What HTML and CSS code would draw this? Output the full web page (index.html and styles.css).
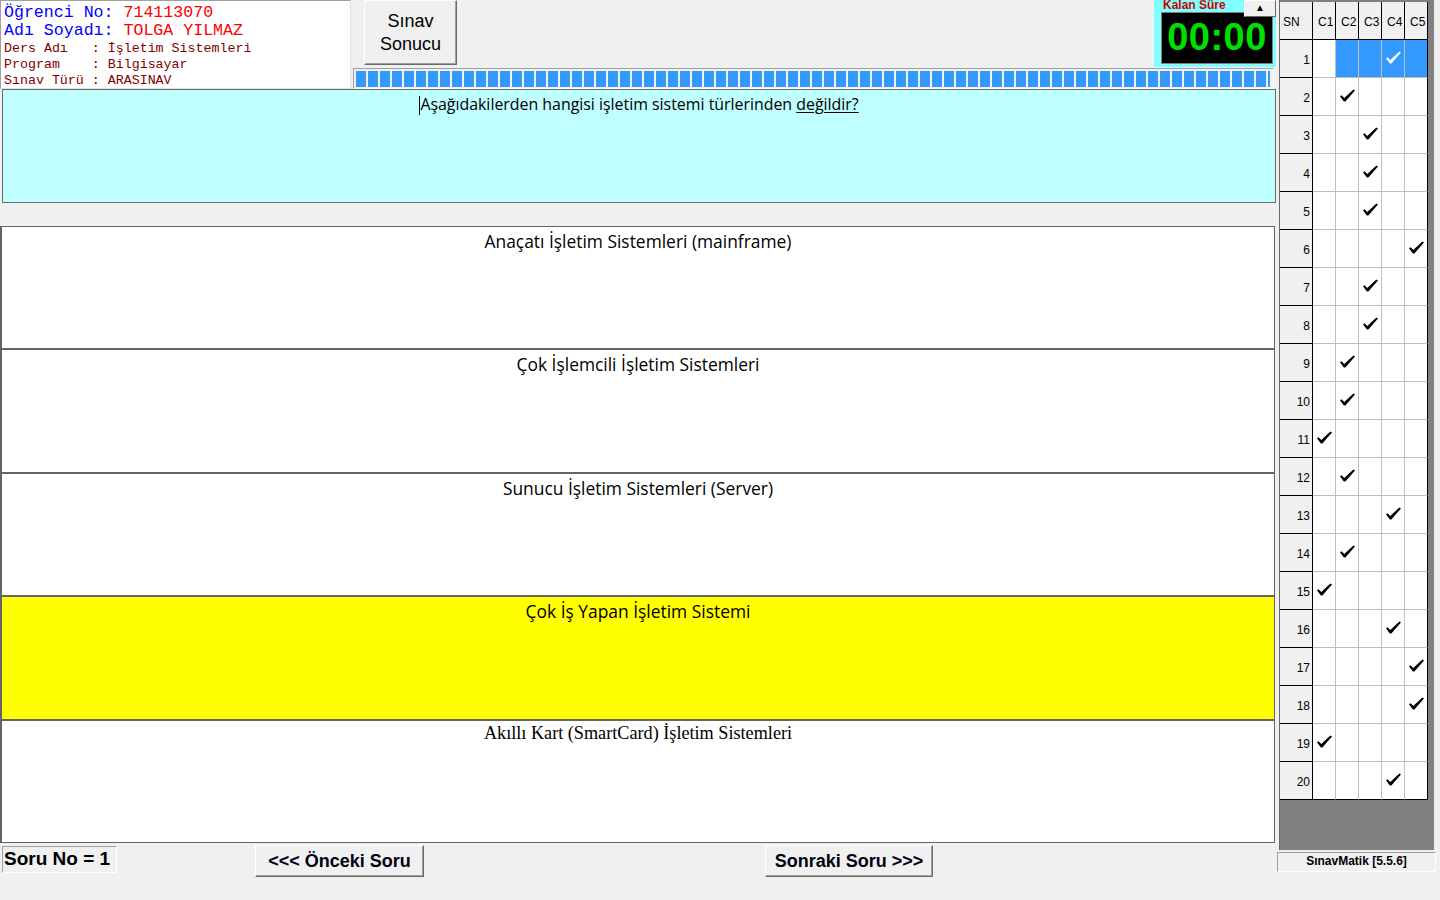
FILE: index.html
```html
<!DOCTYPE html>
<html lang="tr">
<head>
<meta charset="utf-8">
<title>SınavMatik</title>
<link rel="stylesheet" href="styles.css">
</head>
<body>
<svg class="defs" width="0" height="0" aria-hidden="true">
  <symbol id="tk" viewBox="0 0 16 13"><path d="M0 7.4 L1.7 6.1 L4.5 9.1 L14.3 0 L16 1.1 L5.7 13 L4.1 13 Z"/></symbol>
</svg>
<div class="main">
  <div class="top">
    <div class="info">
      <div class="big"><span class="lbl">Öğrenci No: </span><span class="val">714113070</span></div>
      <div class="big"><span class="lbl">Adı Soyadı: </span><span class="val">TOLGA YILMAZ</span></div>
      <div class="small first-small">Ders Adı   : İşletim Sistemleri</div>
      <div class="small">Program    : Bilgisayar</div>
      <div class="small">Sınav Türü : ARASINAV</div>
    </div>
    <div class="top-right">
      <div class="toolbar">
        <div class="btn-result">Sınav<br>Sonucu</div>
        <div class="timer">
          <div class="timer-label">Kalan Süre</div>
          <div class="timer-display">00:00</div>
          <div class="timer-up">▲</div>
        </div>
      </div>
      <div class="progress"><div class="progress-fill"></div></div>
    </div>
  </div>
  <div class="question"><span class="caret"></span>Aşağıdakilerden hangisi işletim sistemi türlerinden <u>değildir?</u></div>
  <div class="answers">
    <div class="answer">Anaçatı İşletim Sistemleri (mainframe)</div>
    <div class="answer">Çok İşlemcili İşletim Sistemleri</div>
    <div class="answer">Sunucu İşletim Sistemleri (Server)</div>
    <div class="answer chosen">Çok İş Yapan İşletim Sistemi</div>
    <div class="answer serif">Akıllı Kart (SmartCard) İşletim Sistemleri</div>
  </div>
  <div class="bottom">
    <div class="soru-no">Soru No = 1</div>
    <div class="nav prev">&lt;&lt;&lt; Önceki Soru</div>
    <div class="nav next">Sonraki Soru &gt;&gt;&gt;</div>
  </div>
</div>
<div class="side">
  <div class="panel">
    <div class="grid">
      <div class="gr head"><div class="sn">SN</div><div class="c">C1</div><div class="c">C2</div><div class="c">C3</div><div class="c">C4</div><div class="c">C5</div></div>
      <div class="gr"><div class="sn">1</div><div class="c"></div><div class="c s"></div><div class="c s"></div><div class="c s"><svg class="tk w"><use href="#tk"/></svg></div><div class="c s"></div></div>
      <div class="gr"><div class="sn">2</div><div class="c"></div><div class="c"><svg class="tk"><use href="#tk"/></svg></div><div class="c"></div><div class="c"></div><div class="c"></div></div>
      <div class="gr"><div class="sn">3</div><div class="c"></div><div class="c"></div><div class="c"><svg class="tk"><use href="#tk"/></svg></div><div class="c"></div><div class="c"></div></div>
      <div class="gr"><div class="sn">4</div><div class="c"></div><div class="c"></div><div class="c"><svg class="tk"><use href="#tk"/></svg></div><div class="c"></div><div class="c"></div></div>
      <div class="gr"><div class="sn">5</div><div class="c"></div><div class="c"></div><div class="c"><svg class="tk"><use href="#tk"/></svg></div><div class="c"></div><div class="c"></div></div>
      <div class="gr"><div class="sn">6</div><div class="c"></div><div class="c"></div><div class="c"></div><div class="c"></div><div class="c"><svg class="tk"><use href="#tk"/></svg></div></div>
      <div class="gr"><div class="sn">7</div><div class="c"></div><div class="c"></div><div class="c"><svg class="tk"><use href="#tk"/></svg></div><div class="c"></div><div class="c"></div></div>
      <div class="gr"><div class="sn">8</div><div class="c"></div><div class="c"></div><div class="c"><svg class="tk"><use href="#tk"/></svg></div><div class="c"></div><div class="c"></div></div>
      <div class="gr"><div class="sn">9</div><div class="c"></div><div class="c"><svg class="tk"><use href="#tk"/></svg></div><div class="c"></div><div class="c"></div><div class="c"></div></div>
      <div class="gr"><div class="sn">10</div><div class="c"></div><div class="c"><svg class="tk"><use href="#tk"/></svg></div><div class="c"></div><div class="c"></div><div class="c"></div></div>
      <div class="gr"><div class="sn">11</div><div class="c"><svg class="tk"><use href="#tk"/></svg></div><div class="c"></div><div class="c"></div><div class="c"></div><div class="c"></div></div>
      <div class="gr"><div class="sn">12</div><div class="c"></div><div class="c"><svg class="tk"><use href="#tk"/></svg></div><div class="c"></div><div class="c"></div><div class="c"></div></div>
      <div class="gr"><div class="sn">13</div><div class="c"></div><div class="c"></div><div class="c"></div><div class="c"><svg class="tk"><use href="#tk"/></svg></div><div class="c"></div></div>
      <div class="gr"><div class="sn">14</div><div class="c"></div><div class="c"><svg class="tk"><use href="#tk"/></svg></div><div class="c"></div><div class="c"></div><div class="c"></div></div>
      <div class="gr"><div class="sn">15</div><div class="c"><svg class="tk"><use href="#tk"/></svg></div><div class="c"></div><div class="c"></div><div class="c"></div><div class="c"></div></div>
      <div class="gr"><div class="sn">16</div><div class="c"></div><div class="c"></div><div class="c"></div><div class="c"><svg class="tk"><use href="#tk"/></svg></div><div class="c"></div></div>
      <div class="gr"><div class="sn">17</div><div class="c"></div><div class="c"></div><div class="c"></div><div class="c"></div><div class="c"><svg class="tk"><use href="#tk"/></svg></div></div>
      <div class="gr"><div class="sn">18</div><div class="c"></div><div class="c"></div><div class="c"></div><div class="c"></div><div class="c"><svg class="tk"><use href="#tk"/></svg></div></div>
      <div class="gr"><div class="sn">19</div><div class="c"><svg class="tk"><use href="#tk"/></svg></div><div class="c"></div><div class="c"></div><div class="c"></div><div class="c"></div></div>
      <div class="gr last"><div class="sn">20</div><div class="c"></div><div class="c"></div><div class="c"></div><div class="c"><svg class="tk"><use href="#tk"/></svg></div><div class="c"></div></div>
    </div>
  </div>
  <div class="version">SınavMatik [5.5.6]</div>
</div>
</body>
</html>
```
FILE: styles.css
```css
* { box-sizing: border-box; }
html, body { margin: 0; padding: 0; }
body {
  width: 1440px;
  height: 900px;
  overflow: hidden;
  background: #f0f0f0;
  font-family: "Liberation Sans", Arial, sans-serif;
  display: flex;
  align-items: flex-start;
}
.defs { position: absolute; width: 0; height: 0; }

.main { width: 1276px; display: flex; flex-direction: column; }

/* top area */
.top { display: flex; height: 89px; }
.info {
  width: 351px;
  height: 89px;
  background: #fff;
  border: 1px solid;
  border-color: #a0a0a0 #e3e3e3 #e3e3e3 #a0a0a0;
  padding: 3px 0 0 3px;
  font-family: "Liberation Mono", "Courier New", monospace;
}
.info > div { white-space: pre; }
.info .big { font-size: 16.6px; line-height: 18px; }
.info .small { font-size: 13.3px; line-height: 16px; color: #800000; }
.info .first-small { margin-top: 1px; }
.lbl { color: #0000ff; }
.val { color: #ff0000; }

.top-right { flex: 1; margin-left: 2px; display: flex; flex-direction: column; }
.toolbar { height: 68px; display: flex; align-items: flex-start; }
.btn-result {
  margin-left: 11px;
  width: 93px;
  height: 65px;
  background: #f0f0f0;
  border: 1px solid;
  border-color: #fff #696969 #696969 #fff;
  box-shadow: inset -1px -1px 0 #a0a0a0;
  font-size: 18px;
  line-height: 23px;
  text-align: center;
  padding-top: 9px;
  color: #000;
}
.timer {
  margin-left: auto;
  width: 122px;
  height: 67px;
  background: #80ffff;
  position: relative;
  padding: 12px 3px 3px 7px;
}
.timer-label {
  position: absolute;
  left: 9px;
  top: -1px;
  color: #d00000;
  font-weight: bold;
  font-size: 12px;
  line-height: 13px;
}
.timer-display {
  height: 52px;
  background: #000;
  border: 1px solid #808080;
  color: #00e000;
  font-weight: bold;
  font-size: 38px;
  line-height: 48px;
  text-align: center;
  letter-spacing: 0.5px;
}
.timer-up {
  position: absolute;
  right: 0;
  top: 0;
  width: 32px;
  height: 17px;
  background: #f0f0f0;
  border: 1px solid;
  border-color: #fff #696969 #696969 #fff;
  font-size: 10px;
  line-height: 14px;
  text-align: center;
  color: #000;
}
.progress {
  width: 921px;
  height: 21px;
  border: 1px solid;
  border-color: #a0a0a0 #fff #fff #a0a0a0;
  padding: 2px 3px 1px 2px;
}
.progress-fill {
  height: 100%;
  background: repeating-linear-gradient(90deg, #3399ff 0 10px, transparent 10px 12px);
}

/* question */
.question {
  margin-left: 2px;
  width: 1274px;
  height: 114px;
  background: #c0ffff;
  border: 1px solid #696969;
  text-align: center;
  padding-top: 3px;
  font-family: "Open Sans", sans-serif;
  font-size: 15.9px;
  line-height: 22px;
  color: #000;
}
.question u { text-underline-offset: 2px; }
.caret {
  display: inline-block;
  width: 1px;
  height: 19px;
  background: #000;
  vertical-align: -5px;
}

/* answers */
.answers {
  margin-top: 23px;
  width: 1275px;
  height: 617px;
  display: grid;
  grid-template-rows: repeat(5, 1fr);
}
.answer {
  background: #fff;
  border: 1px solid #646464;
  border-left-width: 2px;
  text-align: center;
  padding-top: 3px;
  font-family: "Open Sans", sans-serif;
  font-size: 17.4px;
  line-height: 22px;
  color: #000;
}
.answer.chosen { background: #ffff00; }
.answer.serif {
  font-family: "Liberation Serif", "Times New Roman", serif;
  font-size: 18.2px;
  padding-top: 1px;
}

/* bottom */
.bottom { display: flex; align-items: flex-start; padding-top: 2px; }
.soru-no {
  margin-left: 2px;
  margin-top: 1px;
  width: 115px;
  height: 27px;
  border: 1px solid;
  border-color: #a0a0a0 #fff #fff #a0a0a0;
  font-weight: bold;
  font-size: 19px;
  line-height: 24px;
  padding-left: 1px;
  white-space: nowrap;
}
.nav {
  height: 32px;
  background: #f0f0f0;
  border: 1px solid;
  border-color: #fff #696969 #696969 #fff;
  box-shadow: inset -1px -1px 0 #a0a0a0;
  font-weight: bold;
  font-size: 18px;
  line-height: 30px;
  text-align: center;
  color: #000010;
  white-space: nowrap;
}
.prev { margin-left: 138px; width: 169px; }
.next { margin-left: 341px; width: 168px; }

/* side panel */
.side { margin-left: 3px; width: 157px; display: flex; flex-direction: column; }
.panel {
  width: 155px;
  height: 850px;
  background: #808080;
  border-left: 1px solid #696969;
  padding: 2px 0 0 0;
}
.grid { width: 148px; }
.gr {
  display: grid;
  grid-template-columns: 33px repeat(5, 23px);
  height: 38px;
  font-size: 12px;
  color: #000;
}
.gr > div {
  border-right: 1px solid #c0c0c0;
  border-bottom: 1px solid #c0c0c0;
  background: #fff;
  display: flex;
  align-items: center;
  justify-content: center;
}
.gr > .sn {
  background: #f0f0f0;
  border-color: #000;
  justify-content: flex-end;
  padding-right: 2px;
  padding-top: 2px;
}
.gr > div:last-child { border-right-color: #000; }
.gr.head > div {
  background: #f0f0f0;
  border-color: #000;
  justify-content: flex-start;
  padding-left: 5px;
  padding-top: 2px;
}
.gr.head > .sn { padding-left: 3px; }
.gr.last > div { border-bottom-color: #000; }
.gr > .s { background: #3399ff; }
.tk { width: 15px; height: 13px; fill: #000; margin-top: -2px; }
.tk.w { fill: #fff; }

.version {
  margin-left: -2px;
  margin-top: 2px;
  width: 159px;
  height: 20px;
  border: 1px solid;
  border-color: #a0a0a0 #fff #fff #a0a0a0;
  font-weight: bold;
  font-size: 12px;
  line-height: 17px;
  text-align: center;
  color: #000;
}
```
